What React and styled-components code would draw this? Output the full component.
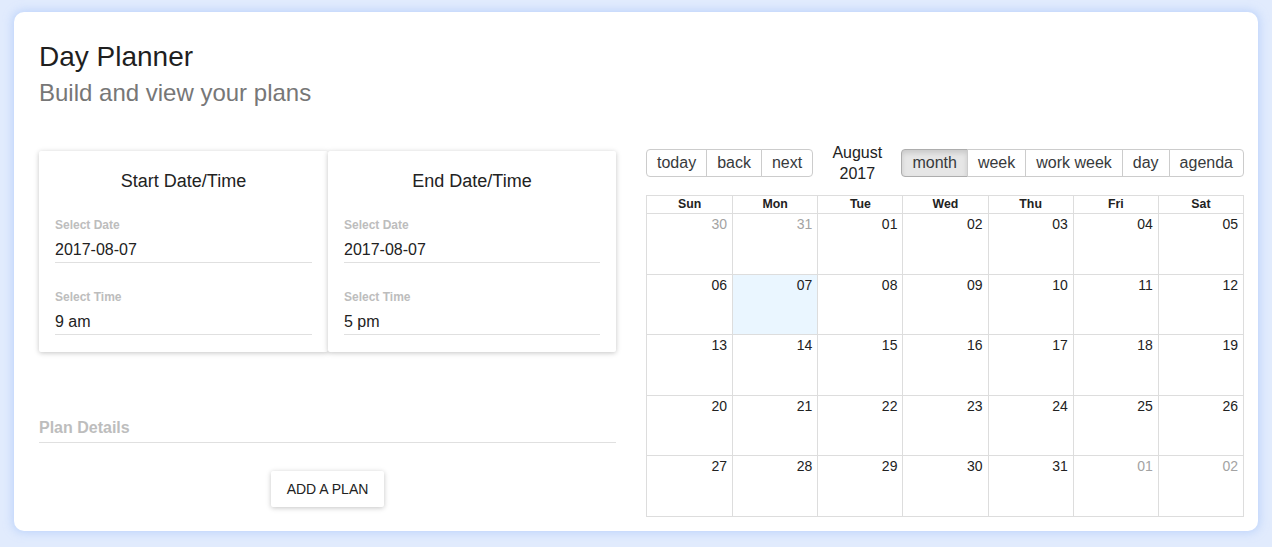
import React from "react";
import styled, { createGlobalStyle } from "styled-components";

const Global = createGlobalStyle`
  html, body { margin: 0; padding: 0; background: #e1ebfd; }
  body { font-family: "Liberation Sans", Arial, sans-serif; color: #222; }
  * { box-sizing: border-box; }
`;

const Page = styled.div`
  padding: 12px 14px 16px 14px;
`;

const Card = styled.div`
  background: #fff;
  border-radius: 10px;
  box-shadow: 0 0 8px 2px rgba(170, 198, 250, 0.6);
  padding: 29px 14px 14px 25px;
`;

const Title = styled.h1`
  margin: 0;
  font-size: 28px;
  line-height: 32px;
  font-weight: normal;
  color: #1f1f1f;
`;

const Subtitle = styled.h2`
  margin: 6px 0 0;
  font-size: 24px;
  line-height: 28px;
  font-weight: normal;
  color: #777;
`;

const Main = styled.div`
  display: grid;
  grid-template-columns: 577px 598px;
  column-gap: 30px;
  margin-top: 35px;
`;

const LeftCol = styled.div`
  padding-top: 9px;
  display: flex;
  flex-direction: column;
`;

const Papers = styled.div`
  display: grid;
  grid-template-columns: 289px 288px;
`;

const Paper = styled.div`
  background: #fff;
  box-shadow: rgba(0, 0, 0, 0.12) 0 1px 6px, rgba(0, 0, 0, 0.12) 0 1px 4px;
  border-radius: 2px;
  padding: 18px 16px 17px 16px;
`;

const PaperTitle = styled.div`
  text-align: center;
  font-size: 18px;
  line-height: 24px;
  color: #222;
  margin-bottom: 25px;
`;

const Field = styled.div`
  border-bottom: 1px solid #e0e0e0;
  & + & { margin-top: 27px; }
`;

const Label = styled.div`
  font-size: 12px;
  line-height: 14px;
  font-weight: bold;
  color: #bdbdbd;
  margin-bottom: 6px;
`;

const Value = styled.div`
  font-size: 16px;
  line-height: 24px;
  color: #222;
`;

const DetailsField = styled.div`
  margin-top: 66px;
  padding-bottom: 4px;
  border-bottom: 1px solid #e0e0e0;
  font-size: 16px;
  line-height: 20px;
  font-weight: bold;
  color: #bdbdbd;
`;

const ButtonRow = styled.div`
  display: flex;
  justify-content: center;
  margin-top: 28px;
`;

const RaisedButton = styled.button`
  font-family: inherit;
  font-size: 14px;
  color: #222;
  background: #fff;
  border: none;
  border-radius: 2px;
  height: 36px;
  padding: 0 16px;
  box-shadow: rgba(0, 0, 0, 0.12) 0 1px 6px, rgba(0, 0, 0, 0.12) 0 1px 4px;
`;

const Toolbar = styled.div`
  display: flex;
  align-items: center;
  margin-bottom: 11px;
`;

const BtnGroup = styled.div`
  display: flex;
`;

const ToolBtn = styled.button`
  font-family: inherit;
  font-size: 16px;
  line-height: 18px;
  padding: 4px 10px;
  color: #373a3c;
  background: ${(p) => (p.$active ? "#e6e6e6" : "#fff")};
  border: 1px solid ${(p) => (p.$active ? "#adadad" : "#ccc")};
  box-shadow: ${(p) => (p.$active ? "inset 0 3px 5px rgba(0,0,0,0.125)" : "none")};
  margin: 0;
  & + & { margin-left: -1px; }
  &:first-child { border-radius: 4px 0 0 4px; }
  &:last-child { border-radius: 0 4px 4px 0; }
`;

const ToolLabel = styled.div`
  flex: 1;
  padding: 0 10px;
  text-align: center;
  font-size: 16px;
  line-height: 21px;
  color: #222;
`;

const Month = styled.div`
  border: 1px solid #ddd;
  height: 322px;
  display: flex;
  flex-direction: column;
`;

const HeaderRow = styled.div`
  display: grid;
  grid-template-columns: repeat(7, 1fr);
  border-bottom: 1px solid #ddd;
`;

const HeaderCell = styled.div`
  text-align: center;
  font-size: 12.3px;
  font-weight: bold;
  line-height: 17px;
  color: #222;
  & + & { border-left: 1px solid #ddd; }
`;

const WeekRow = styled.div`
  flex: 1;
  display: grid;
  grid-template-columns: repeat(7, 1fr);
  & + & { border-top: 1px solid #ddd; }
`;

const DayCell = styled.div`
  background: ${(p) => (p.$today ? "#eaf6ff" : "transparent")};
  text-align: right;
  padding: 2px 5px 0 0;
  font-size: 14px;
  line-height: 16px;
  color: ${(p) => (p.$off ? "#a3a3a3" : "#222")};
  & + & { border-left: 1px solid #ddd; }
`;

const days = ["Sun", "Mon", "Tue", "Wed", "Thu", "Fri", "Sat"];

const weeks = (() => {
  const all = [{ d: 30, off: true }, { d: 31, off: true }];
  for (let i = 1; i <= 31; i++) all.push({ d: i });
  all.push({ d: 1, off: true }, { d: 2, off: true });
  const out = [];
  for (let i = 0; i < 35; i += 7) out.push(all.slice(i, i + 7));
  return out;
})();

const pad = (n) => String(n).padStart(2, "0");

function DateTimeCard({ title, date, time }) {
  return (
    <Paper>
      <PaperTitle>{title}</PaperTitle>
      <Field>
        <Label>Select Date</Label>
        <Value>{date}</Value>
      </Field>
      <Field>
        <Label>Select Time</Label>
        <Value>{time}</Value>
      </Field>
    </Paper>
  );
}

export default function App() {
  return (
    <>
      <Global />
      <Page>
        <Card>
          <Title>Day Planner</Title>
          <Subtitle>Build and view your plans</Subtitle>
          <Main>
            <LeftCol>
              <Papers>
                <DateTimeCard title="Start Date/Time" date="2017-08-07" time="9 am" />
                <DateTimeCard title="End Date/Time" date="2017-08-07" time="5 pm" />
              </Papers>
              <DetailsField>Plan Details</DetailsField>
              <ButtonRow>
                <RaisedButton>ADD A PLAN</RaisedButton>
              </ButtonRow>
            </LeftCol>
            <div>
              <Toolbar>
                <BtnGroup>
                  <ToolBtn>today</ToolBtn>
                  <ToolBtn>back</ToolBtn>
                  <ToolBtn>next</ToolBtn>
                </BtnGroup>
                <ToolLabel>August 2017</ToolLabel>
                <BtnGroup>
                  <ToolBtn $active>month</ToolBtn>
                  <ToolBtn>week</ToolBtn>
                  <ToolBtn>work week</ToolBtn>
                  <ToolBtn>day</ToolBtn>
                  <ToolBtn>agenda</ToolBtn>
                </BtnGroup>
              </Toolbar>
              <Month>
                <HeaderRow>
                  {days.map((d) => (
                    <HeaderCell key={d}>{d}</HeaderCell>
                  ))}
                </HeaderRow>
                {weeks.map((w, i) => (
                  <WeekRow key={i}>
                    {w.map((c, j) => (
                      <DayCell key={j} $off={c.off} $today={!c.off && c.d === 7}>
                        {pad(c.d)}
                      </DayCell>
                    ))}
                  </WeekRow>
                ))}
              </Month>
            </div>
          </Main>
        </Card>
      </Page>
    </>
  );
}
